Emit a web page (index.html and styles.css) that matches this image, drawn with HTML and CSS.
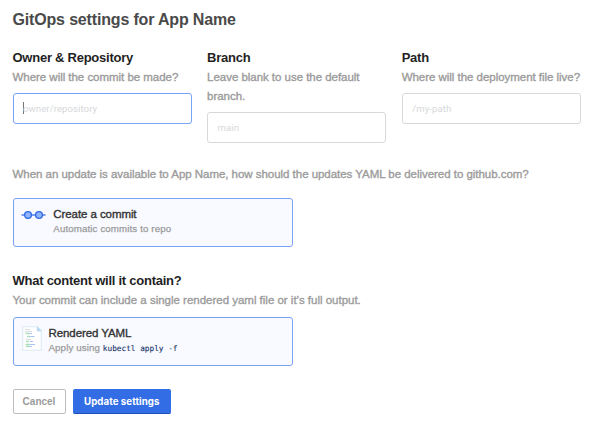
FILE: index.html
```html
<!DOCTYPE html>
<html lang="en">
<head>
<meta charset="utf-8">
<title>GitOps settings</title>
<link rel="stylesheet" href="styles.css">
</head>
<body>
<main class="settings">
  <h1 class="title">GitOps settings for App Name</h1>
  <div class="fields">
    <div class="field">
      <h2 class="heading">Owner &amp; Repository</h2>
      <p class="help">Where will the commit be made?</p>
      <div class="input focused"><span class="caret"></span><span>owner/repository</span></div>
    </div>
    <div class="field">
      <h2 class="heading">Branch</h2>
      <p class="help">Leave blank to use the default<br>branch.</p>
      <div class="input"><span>main</span></div>
    </div>
    <div class="field">
      <h2 class="heading">Path</h2>
      <p class="help">Where will the deployment file live?</p>
      <div class="input"><span>/my-path</span></div>
    </div>
  </div>
  <p class="help question">When an update is available to App Name, how should the updates YAML be delivered to github.com?</p>
  <div class="card">
    <svg class="commit-icon" viewBox="0 0 25 10">
      <path d="M0.5 5H24.5" stroke="#326de6" stroke-width="1.3"/>
      <circle cx="7" cy="5" r="3.4" fill="#8fb4fb" stroke="#326de6" stroke-width="1.4"/>
      <circle cx="18" cy="5" r="3.4" fill="#8fb4fb" stroke="#326de6" stroke-width="1.4"/>
    </svg>
    <div>
      <p class="card-title">Create a commit</p>
      <p class="card-text">Automatic commits to repo</p>
    </div>
  </div>
  <h2 class="heading content-heading">What content will it contain?</h2>
  <p class="help content-help">Your commit can include a single rendered yaml file or it’s full output.</p>
  <div class="card yaml">
    <svg class="file-icon" viewBox="0 0 20 25">
      <path d="M.7.7H15.2L19.3 5V24.3H.7Z" fill="#fff" stroke="#dbeaf5" stroke-width="1.1"/>
      <path d="M15.2.7V5H19.3Z" fill="#b5d8f5" stroke="#b5d8f5" stroke-width=".7"/>
      <path d="M3 3.5H8M3 5.5H10M4 13.5H9" stroke="#dadddf"/>
      <path d="M3.5 7.5H7M5 10.5H8M4 15.5H7M3.5 18.5H8M4 20.5H7" stroke="#a9dfba" stroke-width="1.6"/>
      <path d="M7 7.5H10M8 10.5H12.5M8 15.5H11M8 18.5H13M7 20.5H10" stroke="#a9c2f5" stroke-width="1.2"/>
    </svg>
    <div>
      <p class="card-title">Rendered YAML</p>
      <p class="card-text">Apply using <code>kubectl apply -f</code></p>
    </div>
  </div>
  <div class="actions">
    <button class="cancel">Cancel</button>
    <button class="update">Update settings</button>
  </div>
</main>
</body>
</html>
```
FILE: styles.css
```css
* { box-sizing: border-box; }
body { margin: 0; background: #fff; font-family: "Liberation Sans", Arial, sans-serif; }
h1, h2, p { margin: 0; white-space: nowrap; }
.settings { padding: 10px 19px 0 12.5px; }
.title { font-size: 16px; line-height: 20px; letter-spacing: -.165px; color: #4a4a4a; }
.fields { display: grid; grid-template-columns: repeat(3, 179.2px); gap: 15.4px; height: 114px; margin-top: 19px; align-items: start; }
.heading { font-size: 13px; line-height: 18px; letter-spacing: -.25px; color: #1f1f1f; }
.help { font-size: 11.5px; line-height: 19px; letter-spacing: -.035px; margin-top: 1px; color: #9b9b9b; -webkit-text-stroke: .35px #9b9b9b; }
.input { display: flex; align-items: center; height: 30.5px; margin-top: 6px; padding: 0 9.5px; border: 1px solid #d6d8da; border-radius: 3px; font-family: Roboto, sans-serif; font-size: 9.6px; letter-spacing: .07px; color: #d6d8da; }
.input.focused { border-color: #7ba3f5; }
.caret { width: 1px; height: 12px; margin-right: -1px; background: #777; }
.question { margin-top: 2px; }
.card { display: flex; width: 280.5px; height: 49px; margin-top: 14px; padding: 7px 8px; border: 1px solid #7ba3f5; border-radius: 3px; background: #f8faff; }
.commit-icon { width: 25px; height: 10px; margin: 4px 7px 0 -.2px; }
.card-title { font-size: 11.5px; line-height: 16px; letter-spacing: -.08px; color: #323232; -webkit-text-stroke: .35px #323232; }
.card-text { font-size: 9.7px; line-height: 13px; letter-spacing: .13px; color: #9b9b9b; -webkit-text-stroke: .25px #9b9b9b; }
.content-heading { margin-top: 25px; }
.content-help { margin-top: 1px; letter-spacing: -.01px; }
.yaml { margin-top: 7px; }
.file-icon { width: 20px; height: 25px; margin: 1px 7px 0 0; }
code { font: 7.75px "DejaVu Sans Mono", monospace; letter-spacing: 0; color: #163166; -webkit-text-stroke: .1px #163166; }
.actions { display: flex; gap: 7.5px; margin-top: 23px; }
button { height: 25px; padding: 0; border-radius: 2px; font: bold 10px "Liberation Sans", Arial, sans-serif; }
.cancel { width: 53px; border: 1px solid #bdbdbd; background: #fff; color: #9b9b9b; }
.update { width: 97.5px; border: 0; border-bottom: 1px solid #1f50b8; background: #326de6; color: #fff; font-family: Inter, sans-serif; font-size: 9.7px; letter-spacing: .06px; }
```
